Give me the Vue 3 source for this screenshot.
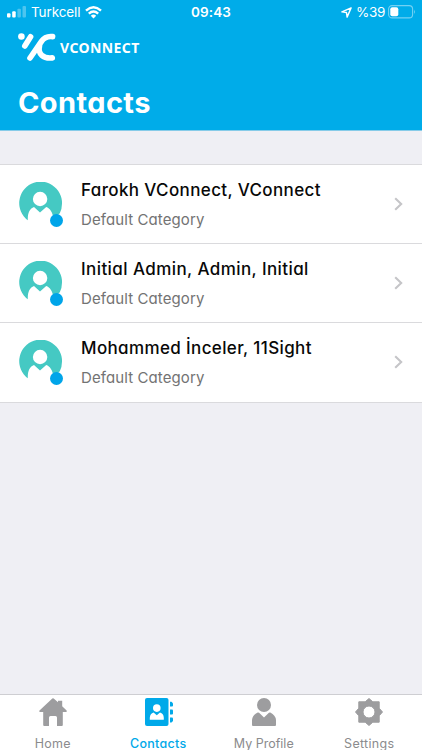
<script setup>
const contacts = [
  { id: 'farokh', name: 'Farokh VConnect, VConnect', category: 'Default Category' },
  { id: 'initial', name: 'Initial Admin, Admin, Initial', category: 'Default Category' },
  { id: 'mohammed', name: 'Mohammed İnceler, 11Sight', category: 'Default Category' },
]
const tabs = ['Home', 'Contacts', 'My Profile', 'Settings']
</script>

<template>
  <main class="app">
    <header class="header">
      <div class="status">
        <div class="carrier">
          <svg class="signal" width="19" height="12" viewBox="0 0 19 12" fill="#fff">
            <rect x="0" y="7.3" width="3.5" height="4.2" rx="1" />
            <rect x="5.2" y="5.2" width="3.5" height="6.3" rx="1" />
            <rect x="10.4" y="2.7" width="3.5" height="8.8" rx="1" opacity=".3" />
            <rect x="15.5" y="0" width="3.5" height="11.5" rx="1" opacity=".3" />
          </svg>
          <span class="operator">Turkcell</span>
          <svg width="17" height="13" viewBox="0 0 17 13" fill="none" stroke="#fff" stroke-width="2.4">
            <path d="M1 4.7Q8.5-2 16 4.7M3.8 7.7Q8.5 3.5 13.2 7.7" />
            <path d="M5.8 9.8Q8.5 7.4 11.2 9.8L8.5 12.5Z" fill="#fff" stroke="none" />
          </svg>
        </div>
        <span class="clock">09:43</span>
        <div class="power">
          <svg width="11" height="11" viewBox="0 0 11 11" fill="none" stroke="#fff" stroke-width="1.4" stroke-linejoin="round">
            <path d="M10.1.9L.9 4.9L5.5 5.5L6.1 10.1Z" />
          </svg>
          <span class="percent">%39</span>
          <svg width="28" height="14" viewBox="0 0 28 14">
            <rect x=".6" y=".6" width="24" height="12.3" rx="3.5" fill="none" stroke="#fff" stroke-opacity=".45" stroke-width="1.1" />
            <rect x="2.3" y="2.3" width="8" height="9" rx="2" fill="#fff" />
            <path d="M26 4.5Q27.8 6.7 26 9Z" fill="#fff" opacity=".45" />
          </svg>
        </div>
      </div>
      <div class="brand">
        <svg width="39" height="30" viewBox="0 0 39 30" fill="none" stroke="#fff" stroke-width="5.6" stroke-linecap="round">
          <circle cx="3.4" cy="4.5" r="3.3" fill="#fff" stroke="none" />
          <path d="M12.6 4.8L6.8 14" />
          <path d="M12 26L23.5 9.3Q27.2 3.8 34.6 4.6" />
          <path d="M21.5 14C19.5 22 25.5 26.9 34.3 25.9" />
        </svg>
        <span class="wordmark">VCONNECT</span>
      </div>
      <h1 class="title">Contacts</h1>
    </header>

    <section class="list">
      <article v-for="c in contacts" :key="c.id" class="row">
        <div class="avatar">
          <svg width="44" height="44" viewBox="0 0 44 44">
            <path d="M8.8 38.2A21.4 21.4 0 1 1 43 21.8Q43 27 40.8 31.2L34.6 37C33.6 30.5 31 26 27.2 25L21 30.6L15 25C10.8 26.4 8.5 31 8.8 38.2Z" fill="#45c9c3" />
            <circle cx="21.1" cy="17" r="7.2" fill="#fff" />
          </svg>
          <i class="presence"></i>
        </div>
        <div class="info">
          <h2 class="name" :class="c.id">{{ c.name }}</h2>
          <p class="category">{{ c.category }}</p>
        </div>
        <svg class="chevron" width="9" height="14" viewBox="0 0 9 14" fill="none" stroke="#c5c5c8" stroke-width="2.1">
          <path d="M1.2 1.2L7.2 7L1.2 12.8" />
        </svg>
      </article>
    </section>

    <nav class="tabs">
      <div v-for="(tab, i) in tabs" :key="tab" class="tab" :class="{ active: i === 1 }">
        <svg v-if="i === 0" width="28" height="28" viewBox="0 0 28 28" fill="currentColor">
          <path d="M13.3.4Q14 0 14.7.4L19 4.3V2.8H23.2V8.2L27.6 12.6Q28.2 13.6 27 13.9H23.8V27Q23.8 28 22.8 28H18V19.5Q18 18 16.5 18H11.5Q10 18 10 19.5V28H5.2Q4.2 28 4.2 27V13.9H1Q-.2 13.6.5 12.6Z" />
        </svg>
        <svg v-else-if="i === 1" class="book" width="28" height="28" viewBox="0 0 28 28">
          <rect width="23.5" height="28" rx="2" fill="currentColor" />
          <g fill="currentColor">
            <path d="M25 3.7H26.5L28 5.2V7.5Q28 8.5 27 8.5H25Z" />
            <path d="M25 11.5H27Q28 11.5 28 12.5V15.5Q28 16.5 27 16.5H25Z" />
            <path d="M25 19.5H27Q28 19.5 28 20.5V23L26.5 24.5H25Z" />
          </g>
          <circle cx="11.8" cy="10.1" r="3.8" fill="#fff" />
          <path d="M4.8 21.7V19.8Q5.1 15.4 8.6 14.6L11.8 17.2L15 14.6Q18.6 15.4 18.8 19.8V21.7Z" fill="#fff" />
        </svg>
        <svg v-else-if="i === 2" width="28" height="28" viewBox="0 0 28 28" fill="currentColor">
          <circle cx="14" cy="7" r="7" />
          <path d="M2 27V22Q2.5 17 7.7 14.5Q8.5 14.2 9.1 14.8L14 19.5L18.9 14.8Q19.5 14.2 20.3 14.5Q25.5 17 26 22V27Q26 28 25 28H3Q2 28 2 27Z" />
        </svg>
        <svg v-else width="28" height="28" viewBox="0 0 28 28">
          <path fill="currentColor" fill-rule="evenodd" stroke="currentColor" stroke-width="1" stroke-linejoin="round" d="M14 .5L17.8 3.8H24.2V10.2L27.5 14L24.2 17.8V24.2H17.8L14 27.5L10.2 24.2H3.8V17.8L.5 14L3.8 10.2V3.8H10.2ZM20 14A6 6 0 1 0 8 14A6 6 0 1 0 20 14Z" />
        </svg>
        <span class="label">{{ tab }}</span>
      </div>
    </nav>
  </main>
</template>

<style>
html,
body {
  margin: 0;
  overflow: hidden;
}
</style>

<style scoped>
.app {
  width: 422px;
  height: 750px;
  overflow: hidden;
  box-sizing: border-box;
  display: flex;
  flex-direction: column;
  background: #efeff4;
  font-family: Inter, "Liberation Sans", sans-serif;
  font-feature-settings: "cv11" 1;
}
.header {
  height: 130px;
  flex: none;
  background: #00ace9;
  color: #fff;
  border-bottom: 1px solid #86cbe8;
  box-sizing: content-box;
}
.status {
  height: 24px;
  padding: 0 6px 0 7px;
  display: grid;
  grid-template-columns: 1fr auto 1fr;
  align-items: center;
  font-size: 13.5px;
  line-height: 24px;
  font-feature-settings: normal;
}
.carrier {
  display: flex;
  align-items: center;
}
.operator {
  margin: 0 5px 0 5px;
  letter-spacing: -0.1px;
}
.clock {
  font-weight: 600;
  letter-spacing: 0.1px;
  margin-right: 1px;
}
.power {
  display: flex;
  align-items: center;
  justify-content: flex-end;
}
.percent {
  margin: 0 3px 0 4px;
  letter-spacing: -0.3px;
}
.brand {
  height: 30px;
  padding: 8px 0 0 18px;
  display: flex;
  align-items: center;
}
.wordmark {
  margin-left: 3px;
  font-family: "Noto Sans", sans-serif;
  font-size: 14px;
  font-weight: 700;
  letter-spacing: 0.42px;
}
.title {
  margin: 23px 0 0 18px;
  font-size: 29px;
  line-height: 36px;
  font-weight: 700;
  letter-spacing: 0.4px;
}
.list {
  margin-top: 33px;
  flex: none;
  border-top: 1px solid #dadadd;
  background: #fff;
}
.row {
  height: 79.2px;
  box-sizing: border-box;
  border-bottom: 1px solid #dadadd;
  padding: 0 19px;
  display: flex;
  align-items: center;
}
.avatar {
  position: relative;
  width: 44px;
  height: 44px;
}
.presence {
  position: absolute;
  left: 31px;
  top: 32px;
  width: 13px;
  height: 13px;
  border-radius: 50%;
  background: #00a5e9;
}
.info {
  flex: 1;
  margin-left: 18px;
}
.name {
  margin: 0;
  font-size: 17px;
  line-height: 26px;
  font-weight: 500;
  color: #080808;
  white-space: nowrap;
  letter-spacing: 0.37px;
}
.name.initial {
  letter-spacing: 0.42px;
}
.category {
  margin: 5px 0 0;
  font-size: 15px;
  line-height: 24px;
  color: #737373;
  letter-spacing: 0.1px;
}
.chevron {
  flex: none;
}
.tabs {
  margin-top: auto;
  height: 55px;
  border-top: 1px solid #ceced2;
  background: #fff;
  display: grid;
  grid-template-columns: repeat(4, 1fr);
}
.tab {
  display: flex;
  flex-direction: column;
  align-items: center;
  padding-top: 3px;
  color: #9d9d9f;
}
.tab.active {
  color: #00a9e9;
}
.book {
  margin-left: 1px;
}
.label {
  margin-top: 12px;
  font-size: 12.5px;
  line-height: 12px;
  color: #8b8b8d;
  letter-spacing: 0.3px;
  white-space: nowrap;
}
.tab:nth-child(3) .label {
  letter-spacing: 0;
}
.active .label {
  color: #00a9e9;
  font-weight: 500;
}
</style>
